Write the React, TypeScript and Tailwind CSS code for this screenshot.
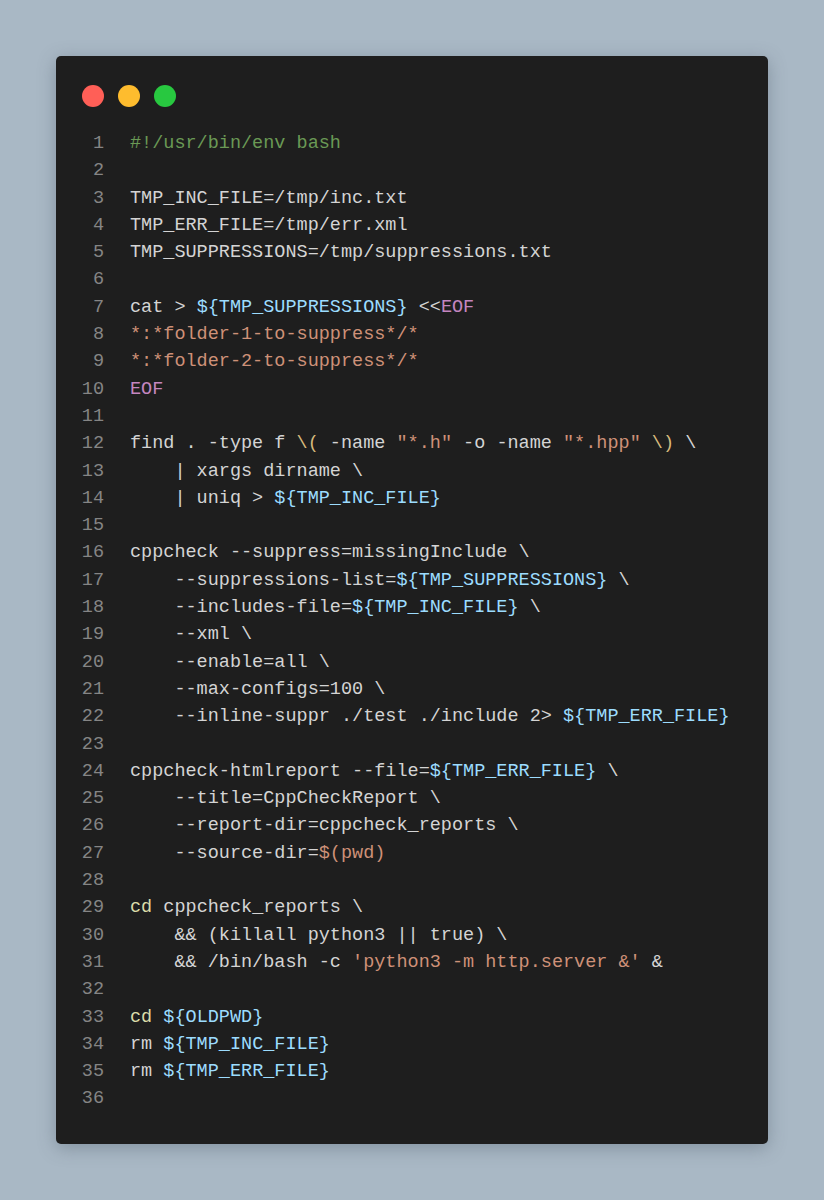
import React from 'react';

type Seg = [string, string?];

const C = {
  com: 'text-[#6a9955]',
  var: 'text-[#9cdcfe]',
  str: 'text-[#ce9178]',
  kw: 'text-[#c586c0]',
  fn: 'text-[#dcdcaa]',
  esc: 'text-[#d7ba7d]',
};

const lines: Seg[][] = [
  [['#!/usr/bin/env bash', C.com]],
  [],
  [['TMP_INC_FILE=/tmp/inc.txt']],
  [['TMP_ERR_FILE=/tmp/err.xml']],
  [['TMP_SUPPRESSIONS=/tmp/suppressions.txt']],
  [],
  [['cat > '], ['${TMP_SUPPRESSIONS}', C.var], [' <<'], ['EOF', C.kw]],
  [['*:*folder-1-to-suppress*/*', C.str]],
  [['*:*folder-2-to-suppress*/*', C.str]],
  [['EOF', C.kw]],
  [],
  [
    ['find . -type f '],
    ['\\(', C.esc],
    [' -name '],
    ['"*.h"', C.str],
    [' -o -name '],
    ['"*.hpp"', C.str],
    [' '],
    ['\\)', C.esc],
    [' \\'],
  ],
  [['    | xargs dirname \\']],
  [['    | uniq > '], ['${TMP_INC_FILE}', C.var]],
  [],
  [['cppcheck --suppress=missingInclude \\']],
  [['    --suppressions-list='], ['${TMP_SUPPRESSIONS}', C.var], [' \\']],
  [['    --includes-file='], ['${TMP_INC_FILE}', C.var], [' \\']],
  [['    --xml \\']],
  [['    --enable=all \\']],
  [['    --max-configs=100 \\']],
  [['    --inline-suppr ./test ./include 2> '], ['${TMP_ERR_FILE}', C.var]],
  [],
  [['cppcheck-htmlreport --file='], ['${TMP_ERR_FILE}', C.var], [' \\']],
  [['    --title=CppCheckReport \\']],
  [['    --report-dir=cppcheck_reports \\']],
  [['    --source-dir='], ['$(pwd)', C.str]],
  [],
  [['cd', C.fn], [' cppcheck_reports \\']],
  [['    && (killall python3 || true) \\']],
  [['    && /bin/bash -c '], ["'python3 -m http.server &'", C.str], [' &']],
  [],
  [['cd', C.fn], [' '], ['${OLDPWD}', C.var]],
  [['rm '], ['${TMP_INC_FILE}', C.var]],
  [['rm '], ['${TMP_ERR_FILE}', C.var]],
  [],
];

const App = () => {
  return (
    <div className="min-h-[1200px] w-[824px] bg-[#a9b8c5] p-[56px]">
      <div className="w-[712px] rounded-[5px] bg-[#1e1e1e] pb-[31px] shadow-[0_4px_18px_rgba(60,75,90,0.35)]">
        <div className="flex gap-[14px] pl-[26px] pt-[29px]">
          <span className="h-[22px] w-[22px] rounded-full bg-[#ff5f57]" />
          <span className="h-[22px] w-[22px] rounded-full bg-[#febc2e]" />
          <span className="h-[22px] w-[22px] rounded-full bg-[#28c840]" />
        </div>
        <div
          className="mt-[23px] pl-[24px] text-[18.5px] leading-[27.3px] text-[#d4d4d4]"
          style={{ fontFamily: '"Liberation Mono", "DejaVu Sans Mono", monospace' }}
        >
          {lines.map((segs, i) => (
            <div key={i} className="flex gap-[26px] whitespace-pre">
              <span className="w-[24px] shrink-0 text-right text-[#858585]">{i + 1}</span>
              <span>
                {segs.map(([t, c], j) => (
                  <span key={j} className={c}>
                    {t}
                  </span>
                ))}
              </span>
            </div>
          ))}
        </div>
      </div>
    </div>
  );
};

export default App;
